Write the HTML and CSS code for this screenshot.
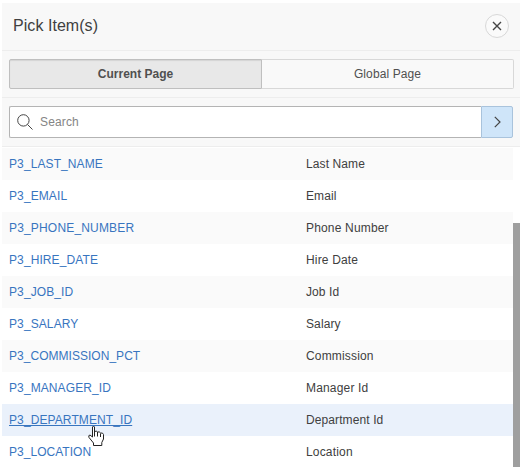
FILE: index.html
```
<!DOCTYPE html>
<html lang="en">
<head>
<meta charset="utf-8">
<title>Pick Item(s)</title>
<link rel="stylesheet" href="styles.css">
</head>
<body>
<section class="dialog">
  <header class="dialog-header">
    <h1>Pick Item(s)</h1>
    <button class="close" aria-label="Close"><svg width="10" height="10" viewBox="0 0 10 10"><path d="M1 1l8 8M9 1l-8 8"/></svg></button>
  </header>
  <nav class="tabs">
    <button class="tab tab-active">Current Page</button>
    <button class="tab">Global Page</button>
  </nav>
  <div class="search-bar">
    <label class="search-field">
      <svg class="search-icon" width="16" height="16" viewBox="0 0 16 16"><circle cx="6.4" cy="6.4" r="5.7"/><path d="M10.5 10.5l5 5"/></svg>
      <input type="text" placeholder="Search">
    </label>
    <button class="go" aria-label="Go"><svg width="7" height="12" viewBox="0 0 7 12"><path d="M.8 .8L6 6L.8 11.2"/></svg></button>
  </div>
  <div class="results">
    <ul class="list">
      <li class="row"><a>P3_LAST_NAME</a><span>Last Name</span></li>
      <li class="row"><a>P3_EMAIL</a><span>Email</span></li>
      <li class="row"><a class="wide">P3_PHONE_NUMBER</a><span class="wide">Phone Number</span></li>
      <li class="row"><a>P3_HIRE_DATE</a><span class="wide">Hire Date</span></li>
      <li class="row"><a>P3_JOB_ID</a><span>Job Id</span></li>
      <li class="row"><a>P3_SALARY</a><span>Salary</span></li>
      <li class="row"><a class="tight">P3_COMMISSION_PCT</a><span class="wide">Commission</span></li>
      <li class="row"><a>P3_MANAGER_ID</a><span class="wide">Manager Id</span></li>
      <li class="row row-hover"><a>P3_DEPARTMENT_ID</a><span>Department Id</span></li>
      <li class="row"><a class="tight">P3_LOCATION</a><span class="wide">Location</span></li>
    </ul>
    <div class="scrollbar"><div class="thumb"></div></div>
  </div>
</section>
<svg class="cursor" width="17" height="22" viewBox="0 0 17 22"><path class="hand" d="M4.5 2Q5.5 0 6.5 2V6.5Q8.5 5.5 9.5 7Q11.5 6.3 12.5 8Q15 7.5 15.5 9.5V14L13.8 17.5V20.5H5.5V18L1 12.5Q0 10.2 2 10L4.5 12V2Z"/><path class="fingers" d="M6.5 6V11.5M9.5 7V11.5M12.5 8.5V12"/></svg>
</body>
</html>
```

FILE: styles.css
```
* { box-sizing: border-box; }
body {
  margin: 0;
  height: 467px;
  overflow: hidden;
  background: #fff;
  color: #404040;
  font: 12px/16px "Liberation Sans", Arial, sans-serif;
}
button { font: inherit; color: inherit; padding: 0; margin: 0; }
svg { display: block; fill: none; stroke: #444; }
.dialog { margin: 3px 3px 0 2px; background: #f8f8f8; }
.dialog-header {
  display: flex;
  align-items: center;
  justify-content: space-between;
  height: 48px;
  padding: 0 11px;
  border-bottom: 1px solid #ededed;
}
h1 { margin: 0 0 2px; font-size: 16px; line-height: 20px; font-weight: 400; letter-spacing: .05px; }
.close {
  display: grid;
  place-items: center;
  width: 24px;
  height: 24px;
  margin-bottom: 2px;
  border: 1px solid #d8d8d8;
  border-radius: 50%;
  background: #fafafa;
}
.close svg { stroke-width: 1.4; }
.tabs { display: flex; height: 47px; padding: 8px 6px 8px 7px; border-bottom: 1px solid #ededed; }
.tab {
  flex: 1;
  border: 1px solid #d8d8d8;
  border-left: 0;
  border-radius: 0 2px 2px 0;
  background: #f9f9f9;
  color: #505050;
  letter-spacing: .1px;
}
.tab-active {
  border: 1px solid #bfbfbf;
  border-radius: 2px 0 0 2px;
  background: #e8e8e8;
  box-shadow: inset 0 1px 1px #d4d4d4;
  font-weight: 700;
  letter-spacing: 0;
}
.search-bar { display: flex; height: 49px; padding: 8px 7px; border-bottom: 1px solid #ededed; }
.search-field {
  display: flex;
  flex: 1;
  align-items: center;
  gap: 7px;
  padding-left: 7px;
  border: 1px solid #b4b4b4;
  border-right: 0;
  border-radius: 2px 0 0 2px;
  background: #fff;
}
input { width: 200px; padding: 0; border: 0; outline: 0; font: inherit; letter-spacing: .15px; }
input::placeholder { color: #858585; opacity: 1; }
.go {
  display: grid;
  place-items: center;
  width: 32px;
  border: 1px solid #a9c3dc;
  border-radius: 0 2px 2px 0;
  background: #cfe5f9;
}
.go svg { stroke-width: 1.2; }
.results { display: flex; height: 320px; padding-top: 1px; background: #fff; }
.list { flex: 1; margin: 0; padding: 0; list-style: none; }
.row { display: grid; grid-template-columns: 297px 1fr; align-items: center; height: 32px; padding-left: 7px; letter-spacing: .1px; }
.row:nth-child(odd) { background: #fafafa; }
.row.row-hover { background: #eaf1fb; }
.row a { color: #3875bf; justify-self: start; }
.row-hover a { text-decoration: underline; }
.wide { letter-spacing: .17px; }
.tight { letter-spacing: .03px; }
.scrollbar { width: 7px; padding-top: 75px; }
.thumb { height: 244px; background: #9f9f9f; }
.cursor { position: absolute; left: 88px; top: 425px; }
.hand { fill: #fff; stroke: #222; stroke-width: 1; }
.fingers { stroke: #222; }
```
